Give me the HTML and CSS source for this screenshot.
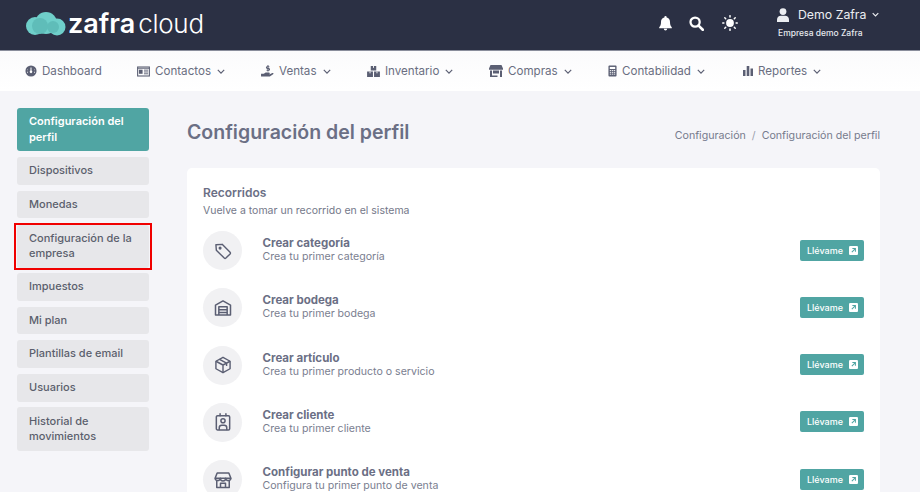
FILE: index.html
```html
<!DOCTYPE html>
<html lang="es">
<head>
<meta charset="utf-8">
<title>Configuración del perfil</title>
<link rel="stylesheet" href="styles.css">
</head>
<body>
<header class="topbar">
  <div class="logo">
    <svg class="logo-cloud" viewBox="0 0 40 24" width="40" height="24"><circle cx="9" cy="14" r="9" fill="#6fcfca"/><circle cx="20" cy="11" r="11" fill="#6fcfca"/><circle cx="31" cy="15" r="8.5" fill="#6fcfca"/><circle cx="14" cy="14" r="8" fill="#5fbdb9"/><circle cx="27" cy="15" r="6" fill="#5fbdb9"/></svg>
    <span class="logo-bold">zafra</span><span class="logo-light">cloud</span>
  </div>
  <div class="top-actions">
    <svg class="top-icon icon-bell" viewBox="0 0 16 16" width="15" height="16"><path fill="#fff" d="M8 0.5a1.2 1.2 0 0 0-1.2 1.2v.5C4.6 2.7 3.2 4.6 3.2 6.8c0 3-.7 4.300-1.900 5.700v1h13.400v-1c-1.200-1.400-1.900-2.700-1.900-5.700 0-2.200-1.400-4.100-3.600-4.600v-.5A1.200 1.200 0 0 0 8 .5zM6.200 14.200a1.800 1.800 0 0 0 3.600 0z"/></svg>
    <svg class="top-icon" viewBox="0 0 16 16" width="15" height="15"><circle cx="6.500" cy="6.500" r="4.900" fill="none" stroke="#fff" stroke-width="2.400"/><path d="M10.200 10.200l4.500 4.500" stroke="#fff" stroke-width="2.800" stroke-linecap="round"/></svg>
    <svg class="top-icon" viewBox="0 0 16 16" width="16" height="16"><circle cx="8" cy="8" r="3.900" fill="#fff"/><g stroke="#fff" stroke-width="1.500" stroke-linecap="round"><path d="M8 .7v1.200M8 14.100v1.200M.7 8h1.200M14.100 8h1.200M2.800 2.800l.9.9M12.300 12.300l.9.9M2.800 13.200l.9-.9M12.300 3.700l.9-.9"/></g></svg>
    <div class="user">
      <div class="user-name">
        <svg viewBox="0 0 14 14" width="14" height="14"><circle cx="7" cy="3.600" r="3.400" fill="#eceef2"/><path fill="#eceef2" d="M1 14v-2.400C1 9.300 2.800 7.800 4.800 7.800h4.400c2 0 3.800 1.500 3.800 3.800V14z"/></svg>
        <span>Demo Zafra</span>
        <svg class="chev-small" viewBox="0 0 10 6" width="7" height="5"><path d="M1 1l4 4 4-4" fill="none" stroke="#eceef2" stroke-width="1.600"/></svg>
      </div>
      <div class="user-company">Empresa demo Zafra</div>
    </div>
  </div>
</header>

<nav class="mainnav">
  <a class="nav-item nav-dash">
    <svg viewBox="0 0 14 14" width="12" height="12"><circle cx="7" cy="7" r="6.500" fill="#5b5f73"/><circle cx="7" cy="8" r="1.500" fill="#fff"/><path d="M7 7V3M3 5.500h.5M11 5.500h-.5M2.500 8.500h1M10.500 8.500h1" stroke="#fff" stroke-width="1.200"/></svg>
    <span>Dashboard</span>
  </a>
  <a class="nav-item nav-contactos">
    <svg viewBox="0 0 14 12" width="13" height="11"><rect x=".6" y="1.100" width="12.800" height="9.800" fill="none" stroke="#5b5f73" stroke-width="1.200"/><rect x="2" y="4" width="4" height="4.500" fill="#5b5f73"/><path d="M7.500 4.500h4.500M7.500 6.500h4.500M7.500 8.500h4.500M.6 2.500h12.800" stroke="#5b5f73" stroke-width="1"/></svg>
    <span>Contactos</span>
    <svg class="chev" viewBox="0 0 10 6" width="8" height="5"><path d="M1 1l4 4 4-4" fill="none" stroke="#5b5f73" stroke-width="1.500"/></svg>
  </a>
  <a class="nav-item nav-ventas">
    <svg viewBox="0 0 14 13" width="13" height="12"><path fill="#5b5f73" d="M0 9.500h3l2-1.300h3.500a1 1 0 0 1 0 2H6.500h2.500l3.200-1.500c1.200-.5 1.900.7.900 1.400l-3.600 2.400H0z"/><path d="M7.500 0v7M9 1.800H6.800a1 1 0 0 0 0 2h1.400a1 1 0 0 1 0 2H6" fill="none" stroke="#5b5f73" stroke-width="1.100"/></svg>
    <span>Ventas</span>
    <svg class="chev" viewBox="0 0 10 6" width="8" height="5"><path d="M1 1l4 4 4-4" fill="none" stroke="#5b5f73" stroke-width="1.500"/></svg>
  </a>
  <a class="nav-item nav-inventario">
    <svg viewBox="0 0 14 12" width="13" height="11"><path fill="#5b5f73" d="M4 0h6v5H4zM0 6h6.400v6H0zM7.600 6H14v6H7.600z"/><path stroke="#fff" stroke-width="1" d="M7 0v2M3.200 6v2M10.800 6v2"/></svg>
    <span>Inventario</span>
    <svg class="chev" viewBox="0 0 10 6" width="8" height="5"><path d="M1 1l4 4 4-4" fill="none" stroke="#5b5f73" stroke-width="1.500"/></svg>
  </a>
  <a class="nav-item nav-compras">
    <svg viewBox="0 0 14 12" width="14" height="12"><path fill="#5b5f73" d="M1.500 0h11L14 3.500v1.200H0V3.500zM1 5.500h2V12H1zM11 5.500h2V12h-2zM4 5.500h6v3H4z"/><path fill="#5b5f73" d="M3 10.500h5.500V12H3z"/></svg>
    <span>Compras</span>
    <svg class="chev" viewBox="0 0 10 6" width="8" height="5"><path d="M1 1l4 4 4-4" fill="none" stroke="#5b5f73" stroke-width="1.500"/></svg>
  </a>
  <a class="nav-item nav-contabilidad">
    <svg viewBox="0 0 10 13" width="9" height="12"><rect x=".5" y=".5" width="9" height="12" rx="1" fill="#5b5f73"/><rect x="2" y="2" width="6" height="2.300" fill="#fff"/><path d="M2 6h1.500M4.300 6h1.500M6.500 6H8M2 8h1.500M4.300 8h1.500M6.500 8H8M2 10h1.500M4.300 10h1.500M6.500 10H8" stroke="#fff" stroke-width="1"/></svg>
    <span>Contabilidad</span>
    <svg class="chev" viewBox="0 0 10 6" width="8" height="5"><path d="M1 1l4 4 4-4" fill="none" stroke="#5b5f73" stroke-width="1.500"/></svg>
  </a>
  <a class="nav-item nav-reportes">
    <svg viewBox="0 0 10 10" width="10" height="10"><path fill="#5b5f73" d="M0 4h2.500v6H0zM3.700 0h2.600v10H3.700zM7.500 2.500H10V10H7.500z"/></svg>
    <span>Reportes</span>
    <svg class="chev" viewBox="0 0 10 6" width="8" height="5"><path d="M1 1l4 4 4-4" fill="none" stroke="#5b5f73" stroke-width="1.500"/></svg>
  </a>
</nav>

<div class="layout">
  <aside class="sidebar">
    <a class="side-item side-active">Configuración del perfil</a>
    <a class="side-item">Dispositivos</a>
    <a class="side-item">Monedas</a>
    <div class="side-marked"><a class="side-item">Configuración de la empresa</a></div>
    <a class="side-item">Impuestos</a>
    <a class="side-item">Mi plan</a>
    <a class="side-item">Plantillas de email</a>
    <a class="side-item">Usuarios</a>
    <a class="side-item">Historial de movimientos</a>
  </aside>

  <main class="content">
    <div class="page-head">
      <h1>Configuración del perfil</h1>
      <div class="crumbs"><span>Configuración</span><span class="crumb-sep">/</span><span>Configuración del perfil</span></div>
    </div>
    <section class="card">
      <h2>Recorridos</h2>
      <p class="card-sub">Vuelve a tomar un recorrido en el sistema</p>

      <div class="tour">
        <div class="tour-icon"><svg viewBox="0 0 24 24" width="20" height="20" fill="none" stroke="#5b5f73" stroke-width="1.700" stroke-linejoin="round"><path d="M3.500 4.500l7.500-.5 9.500 9.500a1.500 1.500 0 0 1 0 2l-5 5a1.500 1.500 0 0 1-2 0L4 11z"/><circle cx="8.500" cy="8.500" r="1" fill="#5b5f73"/></svg></div>
        <div class="tour-text"><div class="tour-title">Crear categoría</div><div class="tour-desc">Crea tu primer categoría</div></div>
        <a class="go"><span>Llévame</span><svg viewBox="0 0 8 8" width="9" height="9"><rect width="8" height="8" rx="1" fill="#fff"/><path d="M2.500 5.500l3-3M3 2.300h2.700V5" fill="none" stroke="#50a5a3" stroke-width=".9"/></svg></a>
      </div>
      <div class="tour">
        <div class="tour-icon"><svg viewBox="0 0 24 24" width="20" height="20" fill="none" stroke="#5b5f73" stroke-width="1.800" stroke-linejoin="round"><path d="M3 20.500V8.500L12 3.500l9 5v12z"/><path d="M7 20.500V10.500h10v10M7 14h10M7 17.300h10"/></svg></div>
        <div class="tour-text"><div class="tour-title">Crear bodega</div><div class="tour-desc">Crea tu primer bodega</div></div>
        <a class="go"><span>Llévame</span><svg viewBox="0 0 8 8" width="9" height="9"><rect width="8" height="8" rx="1" fill="#fff"/><path d="M2.500 5.500l3-3M3 2.300h2.700V5" fill="none" stroke="#50a5a3" stroke-width=".9"/></svg></a>
      </div>
      <div class="tour">
        <div class="tour-icon"><svg viewBox="0 0 24 24" width="20" height="20" fill="none" stroke="#5b5f73" stroke-width="1.700" stroke-linejoin="round"><path d="M12 2.800l8.500 4.700v9L12 21.200 3.500 16.500v-9z"/><path d="M3.500 7.500L12 12l8.500-4.500M12 12v9.200M7.800 5.200l8.500 4.600v3.400"/></svg></div>
        <div class="tour-text"><div class="tour-title">Crear artículo</div><div class="tour-desc">Crea tu primer producto o servicio</div></div>
        <a class="go"><span>Llévame</span><svg viewBox="0 0 8 8" width="9" height="9"><rect width="8" height="8" rx="1" fill="#fff"/><path d="M2.500 5.500l3-3M3 2.300h2.700V5" fill="none" stroke="#50a5a3" stroke-width=".9"/></svg></a>
      </div>
      <div class="tour">
        <div class="tour-icon"><svg viewBox="0 0 24 24" width="20" height="20" fill="none" stroke="#5b5f73" stroke-width="1.800" stroke-linejoin="round" stroke-linecap="round"><rect x="4" y="4.500" width="16" height="17" rx="1.500"/><path d="M8.500 2.200v2.300M15.500 2.200v2.300"/><circle cx="12" cy="10.500" r="2.500"/><path d="M7.500 21v-2a3 3 0 0 1 3-3h3a3 3 0 0 1 3 3v2"/></svg></div>
        <div class="tour-text"><div class="tour-title">Crear cliente</div><div class="tour-desc">Crea tu primer cliente</div></div>
        <a class="go"><span>Llévame</span><svg viewBox="0 0 8 8" width="9" height="9"><rect width="8" height="8" rx="1" fill="#fff"/><path d="M2.500 5.500l3-3M3 2.300h2.700V5" fill="none" stroke="#50a5a3" stroke-width=".9"/></svg></a>
      </div>
      <div class="tour">
        <div class="tour-icon"><svg viewBox="0 0 24 24" width="20" height="20" fill="none" stroke="#5b5f73" stroke-width="1.800" stroke-linejoin="round"><path d="M5 3.500h14l2.500 6.500h-19z"/><path d="M2.500 10a3.200 3.200 0 0 0 6.300 0 3.200 3.200 0 0 0 6.400 0 3.200 3.200 0 0 0 6.300 0"/><path d="M4.500 13v8h15v-8M9 21v-5h6v5"/></svg></div>
        <div class="tour-text"><div class="tour-title">Configurar punto de venta</div><div class="tour-desc">Configura tu primer punto de venta</div></div>
        <a class="go"><span>Llévame</span><svg viewBox="0 0 8 8" width="9" height="9"><rect width="8" height="8" rx="1" fill="#fff"/><path d="M2.500 5.500l3-3M3 2.300h2.700V5" fill="none" stroke="#50a5a3" stroke-width=".9"/></svg></a>
      </div>
    </section>
  </main>
</div>
</body>
</html>
```
FILE: styles.css
```css
* { box-sizing: border-box; }
html, body { margin: 0; height: 492px; overflow: hidden; }
body {
  background: #f5f5f9;
  font-family: Inter, "Open Sans", sans-serif;
  color: #5b5f73;
}
svg { display: block; flex: none; }

.topbar {
  height: 51px;
  background: #2b3044;
  border-bottom: 1px solid #8a8e9c;
  display: flex;
  align-items: center;
  justify-content: space-between;
  padding: 0 0 0 26px;
}
.logo { display: flex; align-items: center; color: #fff; margin-top: -4px; }
.logo-cloud { margin-right: 2px; margin-top: 2px; }
.logo-bold { font-size: 27px; font-weight: 600; }
.logo-light { font-size: 26px; font-weight: 300; margin-left: 3px; letter-spacing: -0.3px; }
.top-actions { display: flex; align-items: center; }
.top-icon { margin-right: 18px; margin-top: -4px; }
.icon-bell { margin-right: 16px; }
.user { width: 154px; padding: 7px 0 0 10px; height: 50px; margin-left: 10px; }
.user-name { display: flex; align-items: center; color: #eceef2; font-size: 12.300px; }
.user-name span { margin-left: 8px; }
.chev-small { margin-left: 6px; }
.user-company { color: #e6e8ee; font-size: 8.500px; margin: 6px 0 0 2px; font-weight: 500; }

.mainnav {
  height: 40px;
  background: linear-gradient(#fbfbfc, #fff);
  display: flex;
  align-items: center;
  padding-left: 25px;
  font-size: 11.600px;
  color: #6a6e81;
}
.nav-item { display: flex; align-items: center; }
.nav-item span { margin-left: 5px; }
.chev { margin-left: 6px; }
.nav-dash { width: 112px; }
.nav-contactos { width: 124px; }
.nav-ventas { width: 106px; }
.nav-inventario { width: 122px; }
.nav-compras { width: 119px; }
.nav-contabilidad { width: 135px; }

.layout { display: flex; align-items: flex-start; padding: 17px 40px 0 17px; }
.sidebar { width: 132px; flex: none; display: flex; flex-direction: column; gap: 5.800px; }
.side-item {
  display: block;
  background: #e7e7ea;
  border-radius: 3px;
  padding: 6.200px 12px;
  font-size: 11px;
  line-height: 15.400px;
  font-weight: 500;
  color: #5b5f6d;
}
.side-active { background: #50a5a3; color: #fff; font-weight: 600; }
.side-marked { margin: -1.500px -3px -2.500px; border: 2px solid #f00000; padding: 0 1px; }

.content { flex: 1; margin-left: 38px; min-width: 0; }
.page-head { display: flex; align-items: center; justify-content: space-between; height: 60px; padding-bottom: 12px; }
h1 { margin: 0; font-size: 19.500px; font-weight: 600; color: #6b6f85; }
.crumbs { font-size: 10.650px; color: #777b8d; display: flex; margin-top: 6px; }
.crumb-sep { margin: 0 6px; color: #9a9dac; }

.card {
  background: #fff;
  border-radius: 5px 5px 0 0;
  padding: 18px 16px 0;
  height: 330px;
  overflow: hidden;
}
h2 { margin: 0; font-size: 12px; line-height: 14px; font-weight: 600; color: #6b6f85; }
.card-sub { margin: 4px 0 13px; font-size: 10.500px; line-height: 14px; color: #747889; }
.tour { display: flex; align-items: center; height: 39px; margin-bottom: 18.300px; }
.tour-icon {
  width: 39px;
  height: 39px;
  border-radius: 50%;
  background: #f1f1f3;
  display: flex;
  align-items: center;
  justify-content: center;
  flex: none;
}
.tour-text { flex: 1; margin-left: 20.500px; }
.tour-title { font-size: 11.500px; line-height: 13px; font-weight: 700; color: #6b6f85; }
.tour-desc { font-size: 10.600px; line-height: 14px; color: #7a7e90; }
.go {
  display: flex;
  align-items: center;
  justify-content: space-between;
  width: 64px;
  height: 21px;
  margin-top: -1px;
  padding: 0 6px 0 7px;
  background: #50a5a3;
  border-radius: 2px;
  color: #fff;
  font-size: 9px;
  font-weight: 500;
}
```
